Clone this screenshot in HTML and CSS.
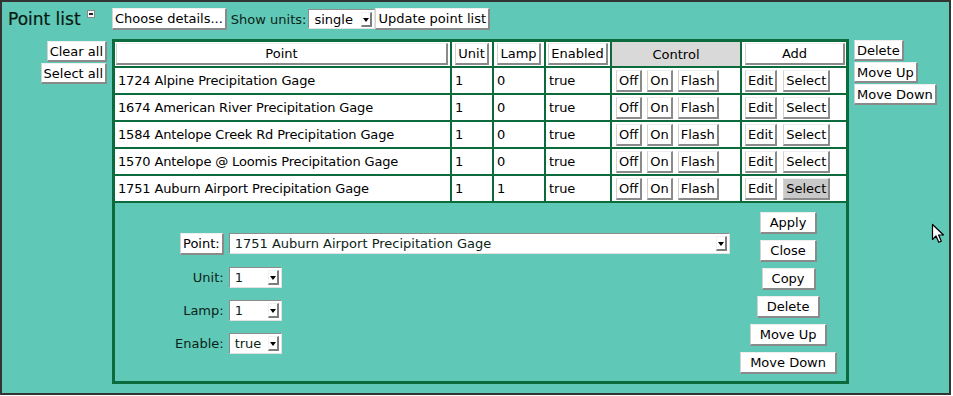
FILE: index.html
```html
<!DOCTYPE html>
<html lang="en">
<head>
    <meta charset="UTF-8">
    <title>Point list</title>
    <link rel="stylesheet" href="styles.css">
</head>
<body>
    <div class="frame">
        <div class="topbar">
            <h1 class="title">Point list<span class="collapse"></span></h1>
            <button class="btn">Choose details...</button>
            <span class="units-label">Show units:</span>
            <span class="select units"><span class="value">single</span><span class="arrow"></span></span>
            <button class="btn update">Update point list</button>
        </div>
        <div class="main">
            <div class="side left">
                <button class="btn">Clear all</button>
                <button class="btn">Select all</button>
            </div>
            <table class="points">
                <colgroup>
                    <col class="c-point">
                    <col class="c-unit">
                    <col class="c-lamp">
                    <col class="c-enabled">
                    <col class="c-control">
                    <col class="c-add">
                </colgroup>
                <thead>
                    <tr>
                        <th class="h-point"><button class="btn wide">Point</button></th>
                        <th><button class="btn">Unit</button></th>
                        <th><button class="btn">Lamp</button></th>
                        <th><button class="btn">Enabled</button></th>
                        <th class="h-control">Control</th>
                        <th class="h-add"><button class="btn wide">Add</button></th>
                    </tr>
                </thead>
                <tbody>
                    <tr>
                        <td>1724 Alpine Precipitation Gage</td>
                        <td>1</td>
                        <td>0</td>
                        <td>true</td>
                        <td><div class="cell-btns"><button class="btn">Off</button><button class="btn">On</button><button class="btn">Flash</button></div></td>
                        <td><div class="cell-btns add"><button class="btn">Edit</button><button class="btn">Select</button></div></td>
                    </tr>
                    <tr>
                        <td>1674 American River Precipitation Gage</td>
                        <td>1</td>
                        <td>0</td>
                        <td>true</td>
                        <td><div class="cell-btns"><button class="btn">Off</button><button class="btn">On</button><button class="btn">Flash</button></div></td>
                        <td><div class="cell-btns add"><button class="btn">Edit</button><button class="btn">Select</button></div></td>
                    </tr>
                    <tr>
                        <td>1584 Antelope Creek Rd Precipitation Gage</td>
                        <td>1</td>
                        <td>0</td>
                        <td>true</td>
                        <td><div class="cell-btns"><button class="btn">Off</button><button class="btn">On</button><button class="btn">Flash</button></div></td>
                        <td><div class="cell-btns add"><button class="btn">Edit</button><button class="btn">Select</button></div></td>
                    </tr>
                    <tr>
                        <td>1570 Antelope @ Loomis Precipitation Gage</td>
                        <td>1</td>
                        <td>0</td>
                        <td>true</td>
                        <td><div class="cell-btns"><button class="btn">Off</button><button class="btn">On</button><button class="btn">Flash</button></div></td>
                        <td><div class="cell-btns add"><button class="btn">Edit</button><button class="btn">Select</button></div></td>
                    </tr>
                    <tr>
                        <td>1751 Auburn Airport Precipitation Gage</td>
                        <td>1</td>
                        <td>1</td>
                        <td>true</td>
                        <td><div class="cell-btns"><button class="btn">Off</button><button class="btn">On</button><button class="btn">Flash</button></div></td>
                        <td><div class="cell-btns add"><button class="btn">Edit</button><button class="btn pressed">Select</button></div></td>
                    </tr>
                    <tr class="detail-row">
                        <td class="detail" colspan="6">
                            <div class="detail-body">
                                <div class="editor">
                                    <button class="btn lbl">Point:</button>
                                    <span class="select wide"><span class="value">1751 Auburn Airport Precipitation Gage</span><span class="arrow"></span></span>
                                    <span class="lbl">Unit:</span>
                                    <span class="select small"><span class="value">1</span><span class="arrow"></span></span>
                                    <span class="lbl">Lamp:</span>
                                    <span class="select small"><span class="value">1</span><span class="arrow"></span></span>
                                    <span class="lbl">Enable:</span>
                                    <span class="select small"><span class="value">true</span><span class="arrow"></span></span>
                                </div>
                                <div class="actions">
                                    <button class="btn">Apply</button>
                                    <button class="btn">Close</button>
                                    <button class="btn">Copy</button>
                                    <button class="btn">Delete</button>
                                    <button class="btn">Move Up</button>
                                    <button class="btn">Move Down</button>
                                </div>
                            </div>
                        </td>
                    </tr>
                </tbody>
            </table>
            <div class="side right">
                <button class="btn">Delete</button>
                <button class="btn">Move Up</button>
                <button class="btn">Move Down</button>
            </div>
        </div>
        <svg class="cursor" width="14" height="21" viewBox="0 0 14 21">
            <path d="M1.5 1.5 L1.5 16.5 L5 13 L7.8 19.3 L10.3 18.2 L7.6 12 L12.5 12 Z" fill="#fff" stroke="#000" stroke-width="1.2" stroke-linejoin="round"/>
        </svg>
    </div>
</body>
</html>
```

FILE: styles.css
```css
body{
    margin: 0;
    background: #fff;
    font-family: "DejaVu Sans", "Noto Sans", sans-serif;
    font-size: 13px;
    color: #000;
}
.frame{
    position: relative;
    box-sizing: border-box;
    width: 951px;
    height: 395px;
    border: 2px solid #333;
    background: #5fc8b7;
    padding: 6px;
}

/* top bar */
.topbar{
    display: flex;
    align-items: center;
    height: 22px;
}
.title{
    display: flex;
    align-items: flex-start;
    width: 104px;
    margin: 0;
    font-size: 17px;
    font-weight: normal;
    color: #06180f;
    line-height: 22px;
    -webkit-text-stroke: 0.2px #06180f;
}
.collapse{
    position: relative;
    width: 6px;
    height: 6px;
    margin: 2px 0 0 6px;
    border: 1px solid #8a8a8a;
    background: #f6f6f6;
}
.collapse::after{
    content: "";
    position: absolute;
    left: 1px;
    right: 1px;
    top: 2px;
    height: 2px;
    background: #222;
}
.units-label{
    margin-left: 4px;
    color: #0c2418;
}
.select.units{
    width: 67px;
    margin-left: 2px;
}
.update{
    margin-left: 6px;
}

/* buttons */
.btn{
    font: inherit;
    color: #000;
    height: 22px;
    margin: 0;
    padding: 0 2px;
    line-height: 1;
    background: #fff;
    border-style: solid;
    border-width: 1px 2px 2px 1px;
    border-color: #eeeeee #8a8a8a #8a8a8a #d2d2d2;
    border-radius: 0;
    white-space: nowrap;
}
.btn.wide{
    display: block;
    width: 100%;
}
.btn.pressed{
    background: #c9c9c9;
}

/* fake select boxes */
.select{
    display: inline-flex;
    align-items: center;
    justify-content: space-between;
    box-sizing: border-box;
    height: 20px;
    padding: 0 2px 0 5px;
    background: #fff;
    border: 1px solid;
    border-color: #8c8c8c #e2e2e2 #e2e2e2 #8c8c8c;
}
.select .arrow{
    position: relative;
    box-sizing: border-box;
    width: 11px;
    height: 15px;
    background: #fff;
    border: 1px solid;
    border-width: 1px 2px 2px 1px;
    border-color: #f2f2f2 #7c7c7c #7c7c7c #f2f2f2;
}
.select .arrow::after{
    content: "";
    position: absolute;
    left: 1px;
    top: 5px;
    border-left: 3px solid transparent;
    border-right: 3px solid transparent;
    border-top: 4px solid #000;
}

/* layout */
.main{
    display: flex;
    align-items: flex-start;
    margin-top: 9px;
}
.side{
    display: flex;
    flex-direction: column;
    gap: 1px;
}
.side .btn{
    height: 21px;
}
.side.left{
    width: 99px;
    margin: 2px 5px 0 0;
    align-items: flex-end;
}
.side.right{
    margin: 1px 0 0 5px;
    align-items: flex-start;
}

/* point table */
.points{
    table-layout: fixed;
    width: 737px;
    border-collapse: separate;
    border-spacing: 2px;
    border: 1px solid #0b6b3d;
    background: #0b6b3d;
}
.c-point{ width: 335px; }
.c-unit{ width: 40px; }
.c-lamp{ width: 50px; }
.c-enabled{ width: 64px; }
.c-control{ width: 128px; }
.c-add{ width: 104px; }
.points thead tr{
    height: 24px;
}
.points tbody tr{
    height: 25px;
}
.points th,
.points td{
    padding: 0 3px;
    background: #fff;
    font-weight: normal;
    text-align: left;
    vertical-align: middle;
    white-space: nowrap;
    overflow: hidden;
}
.points td{
    letter-spacing: -0.15px;
}
.points th{
    text-align: center;
    padding: 0;
}
.points .h-point{
    padding: 0 2px 0 1px;
}
.points .h-add{
    padding: 0 1px 0 3px;
}
.points .h-control{
    background: #d9d9d9;
}
.cell-btns{
    display: flex;
    gap: 5px;
    padding-left: 1px;
    letter-spacing: 0;
}
.cell-btns.add{
    gap: 6px;
    padding-left: 0;
}

/* detail editor */
.points tbody .detail-row{
    height: auto;
}
.points .detail{
    padding: 9px 9px 7px 60px;
    background: #5fc8b7;
    letter-spacing: 0;
}
.detail-body{
    display: flex;
    align-items: center;
    justify-content: space-between;
}
.editor{
    display: grid;
    grid-template-columns: auto auto;
    column-gap: 5px;
    row-gap: 12px;
    align-items: center;
    color: #0c2418;
}
.editor .lbl{
    justify-self: end;
}
.select.wide{
    width: 501px;
    height: 21px;
}
.select.small{
    width: 53px;
    height: 21px;
}
.actions{
    display: flex;
    flex-direction: column;
    align-items: center;
    gap: 6px;
}
.actions .btn{
    padding: 0 9px;
}

.cursor{
    position: absolute;
    left: 929px;
    top: 221px;
}
```
